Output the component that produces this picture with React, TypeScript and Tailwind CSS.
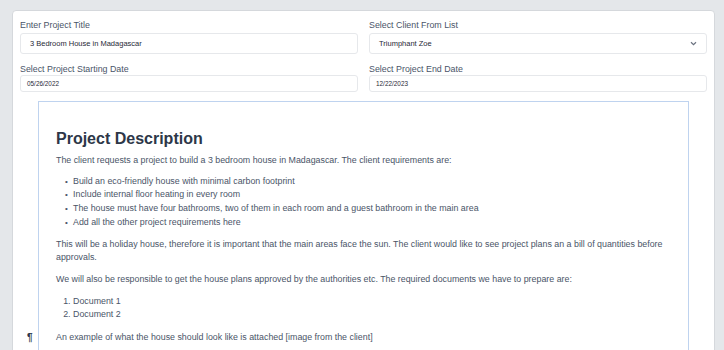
import React from "react";

export default function App() {
  const font = { fontFamily: '"Liberation Sans", Arial, Helvetica, sans-serif' };
  const bullet = "relative before:content-['•'] before:absolute before:left-[-8px] before:top-0 before:text-[8px]";
  return (
    <div className="min-h-[350px] h-[350px] overflow-hidden bg-[#e4e7ea] pl-[12px] pr-[9px] pt-[10px]" style={font}>
      <div className="h-[400px] bg-white border border-[#d5d8dc] rounded-tl-[4px] rounded-tr-[4px] px-[7px] pt-[8px]">
        <div className="grid grid-cols-2 gap-x-[11px]">
          <div>
            <div className="text-[8.85px] leading-[12px] text-[#4a5568] mb-[2px]">Enter Project Title</div>
            <div className="h-[21px] border border-[#e6e8eb] rounded-[3px] flex items-center pl-[9px] text-[7.5px] text-[#1f2937]">
              3 Bedroom House in Madagascar
            </div>
          </div>
          <div>
            <div className="text-[8.85px] leading-[12px] text-[#4a5568] mb-[2px]">Select Client From List</div>
            <div className="h-[21px] border border-[#e6e8eb] rounded-[3px] flex items-center justify-between pl-[9px] pr-[9px] text-[7.5px] text-[#1f2937]">
              <span>Triumphant Zoe</span>
              <svg width="7" height="5" viewBox="0 0 7 5" fill="none">
                <path d="M1 1.2 L3.5 3.6 L6 1.2" stroke="#6b7280" strokeWidth="1.2" />
              </svg>
            </div>
          </div>
          <div className="mt-[9px]">
            <div className="text-[8.85px] leading-[12px] text-[#4a5568]">Select Project Starting Date</div>
            <div className="h-[17px] border border-[#e6e8eb] rounded-[3px] flex items-center pl-[6px] text-[6.4px] text-[#1f2937]">
              05/26/2022
            </div>
          </div>
          <div className="mt-[9px]">
            <div className="text-[8.85px] leading-[12px] text-[#4a5568]">Select Project End Date</div>
            <div className="h-[17px] border border-[#e6e8eb] rounded-[3px] flex items-center pl-[6px] text-[6.4px] text-[#1f2937]">
              12/22/2023
            </div>
          </div>
        </div>
        <div className="mx-[18px] mt-[9px] border border-[#bfd3ef] pl-[17px] pr-[17px] pt-[26px] pb-[60px] text-[8.85px] leading-[13.7px] text-[#4a5568]">
          <h1 className="text-[16px] leading-[22px] font-bold text-[#2d3748]">Project Description</h1>
          <p className="mt-[4px]">The client requests a project to build a 3 bedroom house in Madagascar. The client requirements are:</p>
          <ul className="pl-[17px] mt-[7px]">
            <li className={bullet}>Build an eco-friendly house with minimal carbon footprint</li>
            <li className={bullet}>Include internal floor heating in every room</li>
            <li className={bullet}>The house must have four bathrooms, two of them in each room and a guest bathroom in the main area</li>
            <li className={bullet}>Add all the other project requirements here</li>
          </ul>
          <p className="mt-[8px] pr-[8px]">
            This will be a holiday house, therefore it is important that the main areas face the sun. The client would like to see project plans an a bill of quantities before approvals.
          </p>
          <p className="mt-[8px]">We will also be responsible to get the house plans approved by the authorities etc. The required documents we have to prepare are:</p>
          <ol className="list-decimal pl-[17px] mt-[8px]">
            <li>Document 1</li>
            <li>Document 2</li>
          </ol>
          <p className="mt-[9px] relative">
            <span className="absolute left-[-29px] top-0 text-[#2d3748] text-[10px] font-bold">¶</span>
            An example of what the house should look like is attached [image from the client]
          </p>
        </div>
      </div>
    </div>
  );
}
